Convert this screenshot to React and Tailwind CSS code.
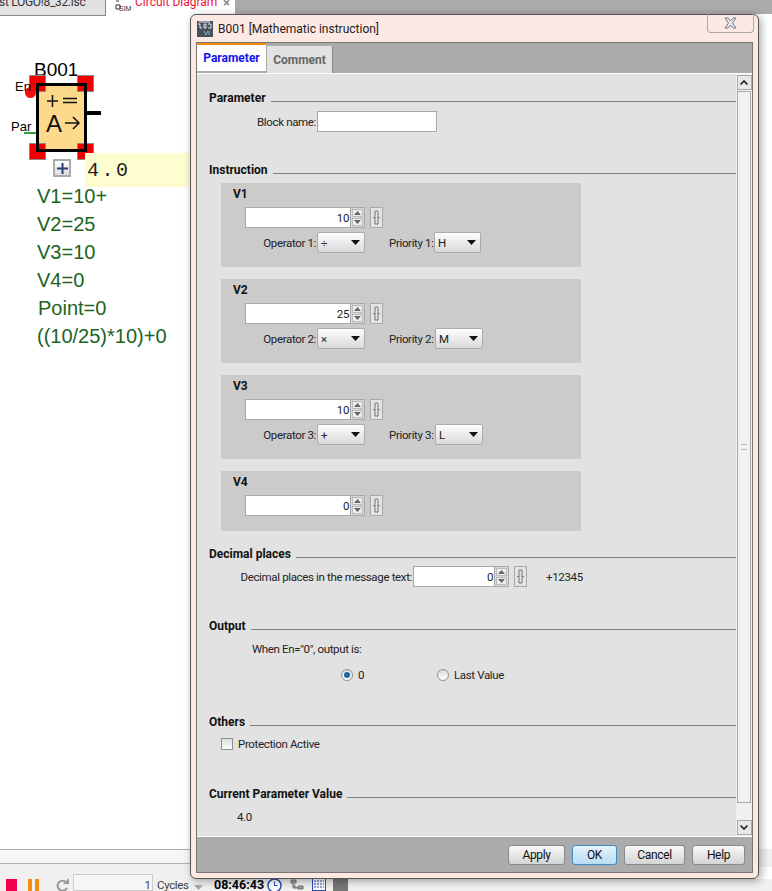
const UI = "font-['Roboto','Liberation_Sans',sans-serif]";

const Arrow = () => (
  <svg width="9" height="5" viewBox="0 0 9 5" className="shrink-0">
    <path d="M0 0h9L4.500 5z" fill="#111" />
  </svg>
);

const BraceButton = () => (
  <div className="w-[13px] h-[21px] border border-[#a8a8a8] bg-[#e4e4e4] flex items-center justify-center">
    <svg width="9" height="15" viewBox="0 0 9 15">
      <path d="M3 1h3v13H3zM3 7.500H1M6 7.500h2" fill="none" stroke="#777" />
    </svg>
  </div>
);

const Spin = ({ value, width = "w-[105px]" }) => (
  <div className="flex items-center">
    <div className={`${width} h-[21px] bg-white border border-[#a8a8a8] border-r-0 flex items-center justify-end pr-px text-[#222]`}>
      {value}
    </div>
    <div className="w-[15px] h-[21px] border border-[#a8a8a8] bg-[#d8d8d8] flex flex-col gap-px p-px">
      <div className="flex-1 bg-[#eee] border border-[#bbb] flex items-center justify-center">
        <svg width="7" height="4" viewBox="0 0 7 4"><path d="M0 4l3.500-4L7 4z" fill="#666" /></svg>
      </div>
      <div className="flex-1 bg-[#eee] border border-[#bbb] flex items-center justify-center">
        <svg width="7" height="4" viewBox="0 0 7 4"><path d="M0 0l3.500 4L7 0z" fill="#666" /></svg>
      </div>
    </div>
    <div className="ml-[5px]">
      <BraceButton />
    </div>
  </div>
);

const Select = ({ value, width }) => (
  <div className={`${width} h-[21px] border border-[#aaa] rounded-[2px] bg-gradient-to-b from-[#fdfdfd] to-[#d9d9d9] flex items-center justify-between pl-[3px] pr-[4px] text-[#222]`}>
    <span>{value}</span>
    <Arrow />
  </div>
);

const Section = ({ title, height, children }) => (
  <section className={`${height} pl-[12px]`}>
    <div className="h-[16px] flex items-end gap-[5px]">
      <h3 className="font-bold text-[12px] leading-[16px] tracking-normal text-[#111] whitespace-nowrap">{title}</h3>
      <div className="flex-1 h-px bg-[#808080] mb-[4px]" />
    </div>
    {children}
  </section>
);

const ValueBox = ({ name, value, op, opValue, pri, priValue, height, priLabel, priWidth }) => (
  <div className={`${height} w-[360px] ml-[12px] mb-[12px] bg-[#cbcbcb] pt-[4px]`}>
    <div className="pl-[12px] h-[14px] text-[12px] leading-[14px] font-bold tracking-normal text-[#111]">{name}</div>
    <div className="pl-[24px] mt-[6px]">
      <Spin value={value} />
    </div>
    {op && (
      <div className="flex items-center mt-[4px] h-[21px]">
        <span className="w-[96px] pr-px text-right text-[#222]">{op}</span>
        <Select value={opValue} width="w-[48px]" />
        <span className={`ml-[24px] ${priLabel} text-[#222] whitespace-nowrap`}>{pri}</span>
        <Select value={priValue} width={priWidth} />
      </div>
    )}
  </div>
);

const Button = ({ label, width, primary }) => (
  <button
    className={`${width} h-[20px] rounded-[3px] border text-[12px] text-[#111] bg-gradient-to-b ${
      primary ? "border-[#3c8cc4] from-[#e6f3fb] to-[#b9ddf4]" : "border-[#8a8a8a] from-[#f8f8f8] to-[#d4d4d4]"
    }`}
  >
    {label}
  </button>
);

const Radio = ({ checked }) => (
  <span className="w-[12px] h-[12px] rounded-full border border-[#909090] bg-gradient-to-b from-[#dcdcdc] to-[#fff] flex items-center justify-center">
    {checked && <span className="w-[6px] h-[6px] rounded-full bg-[#1e6a9e]" />}
  </span>
);

const Dialog = () => (
  <div className={`${UI} absolute left-[190px] top-[14px] w-[569px] h-[865px] rounded-[6px] border border-[#555] bg-[#fde9e4] shadow-[2px_2px_8px_rgba(0,0,0,0.35)] text-[11.500px] leading-[16px] tracking-[-0.35px] flex flex-col px-[5px] pb-[5px]`}>
    <div className="h-[27px] flex items-center relative shrink-0 pl-[1px]">
      <svg width="16" height="16" viewBox="0 0 16 16" className="mr-[5px]">
        <rect width="16" height="16" fill="#44505c" />
        <path d="M1 3h2v4h2M7 3h2v4H7zM11 3h3v4h-3M2 1h11" fill="none" stroke="#e8e8e8" />
        <path d="M7 10l2 4 2-4M12 10v4" fill="none" stroke="#9ab" />
      </svg>
      <span className="text-[12px] tracking-normal text-[#222]">B001 [Mathematic instruction]</span>
      <div className="absolute right-[-1px] top-[-1px] w-[47px] h-[19px] border border-t-0 border-[#aaa] rounded-b-[4px] flex items-center justify-center">
        <svg width="13" height="12" viewBox="0 0 13 12">
          <path d="M1 1h3l2.500 3L9 1h3L8.500 6 12 11H9L6.500 8 4 11H1l3.500-5z" fill="#e8eaf0" stroke="#778" />
        </svg>
      </div>
    </div>
    <div className="flex-1 border border-[#777] bg-[#ababab] flex flex-col min-h-0">
      <div className="h-[30px] flex items-start shrink-0">
        <div className="w-[69px] h-[28px] bg-white border-t-[2px] border-[#f58a0b] text-[12px] font-bold tracking-normal text-[#1414f0] flex items-center justify-center">
          Parameter
        </div>
        <div className="ml-px mt-[3px] w-[66px] h-[27px] bg-[#e2e2e2] border-r border-[#888] text-[12px] font-bold tracking-normal text-[#666] flex items-center justify-center">
          Comment
        </div>
      </div>
      <div className="border-t-[1px] border-white bg-[#e2e2e2] h-[763px] flex relative shrink-0">
        <div className="flex-1 pt-[16px]">
          <Section title="Parameter" height="h-[72px]">
            <div className="flex items-center mt-[5px] h-[21px]">
              <span className="w-[108px] pr-px text-right text-[#222]">Block name:</span>
              <div className="w-[120px] h-[21px] bg-white border border-[#a8a8a8]" />
            </div>
          </Section>
          <Section title="Instruction" height="h-[384px]">
            <div className="mt-[5px]">
              <ValueBox name="V1" value="10" op="Operator 1:" opValue="÷" pri="Priority 1:" priValue="H" height="h-[84px]" priLabel="w-[45px]" priWidth="w-[47px]" />
              <ValueBox name="V2" value="25" op="Operator 2:" opValue="×" pri="Priority 2:" priValue="M" height="h-[84px]" priLabel="w-[46px]" priWidth="w-[48px]" />
              <ValueBox name="V3" value="10" op="Operator 3:" opValue="+" pri="Priority 3:" priValue="L" height="h-[84px]" priLabel="w-[46px]" priWidth="w-[48px]" />
              <ValueBox name="V4" value="0" height="h-[60px]" />
            </div>
          </Section>
          <Section title="Decimal places" height="h-[72px]">
            <div className="flex items-center mt-[4px] h-[21px]">
              <span className="w-[204px] pr-px text-right text-[#222] whitespace-nowrap">Decimal places in the message text:</span>
              <Spin value="0" width="w-[81px]" />
              <span className="ml-[19px] text-[#222]">+12345</span>
            </div>
          </Section>
          <Section title="Output" height="h-[96px]">
            <div className="pl-[43px] mt-[7px] text-[#222]">When En="0", output is:</div>
            <div className="flex items-center mt-[10px] pl-[132px] text-[#222]">
              <Radio checked />
              <span className="ml-[5px] w-[79px]">0</span>
              <Radio />
              <span className="ml-[5px]">Last Value</span>
            </div>
          </Section>
          <Section title="Others" height="h-[72px]">
            <div className="flex items-center pl-[12px] mt-[6px] text-[#222]">
              <span className="w-[12px] h-[12px] border border-[#909090] bg-gradient-to-b from-[#ddd] to-[#fff]" />
              <span className="ml-[5px]">Protection Active</span>
            </div>
          </Section>
          <Section title="Current Parameter Value" height="h-[51px]">
            <div className="pl-[28px] mt-[7px] text-[#222]">4.0</div>
          </Section>
        </div>
        <div className="w-[16px] h-full bg-[#f0f0f0] flex flex-col items-center py-px">
          <div className="w-[15px] h-[15px] bg-[#e8e8e8] border border-[#aaa] flex items-center justify-center">
            <svg width="8" height="5" viewBox="0 0 8 5"><path d="M.5 4.500L4 1l3.500 3.500" fill="none" stroke="#111" strokeWidth="1.500" /></svg>
          </div>
          <div className="w-[14px] h-[712px] mt-px bg-[#f2f2f2] border border-[#aaa] flex items-center justify-center">
            <div className="w-[6px] h-[6px] border-y border-[#bbb]" />
          </div>
          <div className="flex-1" />
          <div className="w-[15px] h-[15px] bg-[#e8e8e8] border border-[#aaa] flex items-center justify-center">
            <svg width="8" height="5" viewBox="0 0 8 5"><path d="M.5.500L4 4l3.500-3.500" fill="none" stroke="#111" strokeWidth="1.500" /></svg>
          </div>
        </div>
      </div>
      <div className="flex-1 border-t border-white flex items-center justify-end pr-[7px] gap-[7px]">
        <Button label="Apply" width="w-[57px]" />
        <Button label="OK" width="w-[45px]" primary />
        <Button label="Cancel" width="w-[61px]" />
        <Button label="Help" width="w-[53px]" />
      </div>
    </div>
  </div>
);

const Corner = ({ className }) => (
  <div className={`absolute w-[17px] h-[17px] bg-[#f00000] border border-[#8a8a8a] ${className}`} />
);

const Block = () => (
  <div className="absolute left-0 top-0 w-[190px] h-[190px] font-['Liberation_Sans',sans-serif] text-black">
    <div className="absolute left-[34px] top-[60px] text-[19px] leading-[20px]">B001</div>
    <div className="absolute left-[36px] top-[83px] w-[51px] h-[69px] bg-[#fdd98c]" />
    <Corner className="left-[29px] top-[75px]" />
    <Corner className="left-[77px] top-[75px]" />
    <Corner className="left-[29px] top-[143px]" />
    <Corner className="left-[77px] top-[143px]" />
    <div className="absolute left-[36px] top-[83px] w-[51px] h-[69px] border-[3px] border-black">
      <svg width="45" height="63" viewBox="0 0 45 63">
        <path d="M8 15h11M13.500 9v12M24 12.500h14M24 16.500h14" stroke="#111" strokeWidth="1.500" fill="none" />
        <path d="M26 37h14M34 31l6 6-6 6" stroke="#111" strokeWidth="1.500" fill="none" />
      </svg>
      <span className="absolute left-[7px] top-[24px] text-[24px] leading-[28px] text-[#111]">A</span>
    </div>
    <div className="absolute left-[86px] top-[111px] w-[15px] h-[4px] bg-black" />
    <div className="absolute left-[25px] top-[87px] w-[11px] h-[11px] rounded-full bg-[#f01010]" />
    <div className="absolute left-[15px] top-[79px] text-[13px] leading-[16px]">En</div>
    <div className="absolute left-[11px] top-[119px] text-[13px] leading-[16px]">Par</div>
    <div className="absolute left-[24px] top-[132px] w-[12px] h-[2px] bg-[#3a9a3a]" />
    <div className="absolute left-[53px] top-[159px] w-[18px] h-[18px] border-2 border-[#aaa] bg-gradient-to-b from-white to-[#ddd] flex items-center justify-center">
      <svg width="11" height="11" viewBox="0 0 11 11"><path d="M0 5.500h11M5.500 0v11" stroke="#2a3f7a" strokeWidth="2" /></svg>
    </div>
    <div className="absolute left-[85px] top-[153px] w-[105px] h-[34px] bg-[#fefdd0] font-['Liberation_Mono',monospace] text-[20px] leading-[36px] pl-[2px] tracking-[2.500px] text-[#222]">
      4.0
    </div>
  </div>
);

const Notes = () => (
  <div className="absolute left-[37px] top-[182px] font-['Liberation_Sans',sans-serif] text-[20px] leading-[28px] text-[#20641f]">
    <div>V1=10+</div>
    <div>V2=25</div>
    <div>V3=10</div>
    <div>V4=0</div>
    <div className="pl-px">Point=0</div>
    <div>((10/25)*10)+0</div>
  </div>
);

const TopTabs = () => (
  <div className={`${UI} absolute left-0 top-0 w-full h-[16px] overflow-hidden`}>
    <div className="absolute left-0 top-0 w-[106px] h-[16px] bg-[#e2e2e2] border-r border-b border-[#888] text-[#333] text-[12px] leading-[14px] tracking-[-0.3px] whitespace-nowrap overflow-hidden">
      <span className="block mt-[-5px] ml-[-1px]">st LOGO!8_32.lsc</span>
    </div>
    <svg className="absolute left-[115px] top-0" width="17" height="12" viewBox="0 0 17 12">
      <path d="M1 1h3M1 5h4v4H1z" fill="none" stroke="#333" />
      <text x="4" y="11" fontSize="7" fill="#333" fontFamily="Liberation Sans">SIM</text>
    </svg>
    <div className="absolute left-[135px] top-[-5px] text-[12px] leading-[14px] text-[#f0103c] whitespace-nowrap">Circuit Diagram</div>
    <div className="absolute left-[223px] top-[-2px] text-[#888] text-[13px] leading-[10px] font-bold">×</div>
    <div className="absolute left-[235px] top-0 right-0 h-[14px] bg-[#ababab]" />
  </div>
);

const StatusBar = () => (
  <>
    <div className="absolute left-0 top-[849px] w-[200px] h-[15px] border-y border-[#b0b0b0] bg-[#f6f6f6]" />
    <div className="absolute left-[755px] right-0 top-[849px] h-[18px] bg-[#f0f0f0]" />
    <div className={`${UI} absolute left-0 top-[864px] w-full h-[27px] text-[11.500px] text-[#444]`}>
      <div className="absolute left-0 top-0 w-[200px] h-[27px] bg-[#f0f0f0]" />
      <div className="absolute left-[200px] top-[15px] right-0 h-[12px] bg-[#f0f0f0]" />
      <div className="absolute left-[6px] top-[15px] w-[11px] h-[12px] bg-[#f0004a]" />
      <div className="absolute left-[28px] top-[15px] w-[4px] h-[12px] bg-[#f58a0b]" />
      <div className="absolute left-[35px] top-[15px] w-[4px] h-[12px] bg-[#f58a0b]" />
      <svg className="absolute left-[56px] top-[14px]" width="14" height="13" viewBox="0 0 14 13">
        <path d="M10 4a5 5 0 1 0 1 6" fill="none" stroke="#999" strokeWidth="2" />
        <path d="M13 0v6H7z" fill="#999" />
      </svg>
      <div className="absolute left-[73px] top-[10px] w-[80px] h-[17px] bg-[#f6f6f6] border border-[#ccc] text-right pr-px leading-[20px]">1</div>
      <div className="absolute left-[157px] top-[14px] leading-[14px] tracking-[-0.35px]">Cycles</div>
      <svg className="absolute left-[194px] top-[21px]" width="9" height="5" viewBox="0 0 9 5"><path d="M0 0h9L4.500 5z" fill="#aaa" /></svg>
      <div className="absolute left-[214px] top-[14px] leading-[14px] text-[12.500px] font-bold text-black">08:46:43</div>
      <svg className="absolute left-[267px] top-[14px]" width="15" height="13" viewBox="0 0 15 13">
        <circle cx="7.500" cy="7.500" r="6.500" fill="#fff" stroke="#2b4fb5" strokeWidth="1.500" />
        <path d="M7.500 3.500v4h3" fill="none" stroke="#2b4fb5" />
      </svg>
      <svg className="absolute left-[290px] top-[15px]" width="14" height="12" viewBox="0 0 14 12">
        <path d="M1 1h5v3H1zM8 7h5v3H8zM3 4v5h5" fill="#999" stroke="#777" />
      </svg>
      <svg className="absolute left-[312px] top-[14px]" width="14" height="13" viewBox="0 0 14 13">
        <rect x=".5" y=".5" width="13" height="12" fill="#fff" stroke="#2b4fb5" />
        <path d="M2 3h10M2 6h10M2 9h10" stroke="#2b4fb5" strokeDasharray="2 1" />
      </svg>
      <div className="absolute left-[333px] top-[15px] w-[15px] h-[12px] bg-[#777]" />
    </div>
  </>
);

export default function App() {
  return (
    <div className="relative w-[772px] h-[891px] bg-white overflow-hidden">
      <TopTabs />
      <Block />
      <Notes />
      <StatusBar />
      <Dialog />
    </div>
  );
}
